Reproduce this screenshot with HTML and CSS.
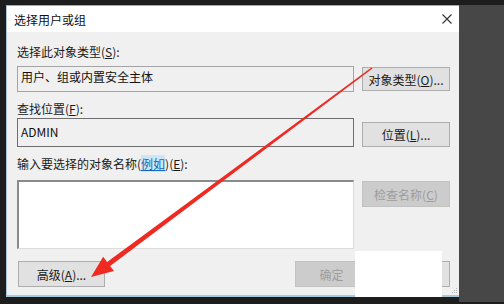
FILE: index.html
```html
<!DOCTYPE html>
<html lang="zh-CN">
<head>
  <meta charset="UTF-8" />
  <title>选择用户或组</title>
  <link rel="stylesheet" href="styles.css">
</head>
<body>
  <div class="screen">
    <div class="desk">
      <div class="dialog">
        <div class="titlebar">
          <span>选择用户或组</span>
          <svg class="close-icon" viewBox="0 0 10 10">
            <path d="M0.5 0.5 L9.5 9.5 M9.5 0.5 L0.5 9.5" />
          </svg>
        </div>

        <div class="content">
          <div class="label label-first">选择此对象类型(<u>S</u>):</div>
          <div class="row">
            <div class="field field-type">用户、组或内置安全主体</div>
            <button class="btn btn-type">对象类型(<u>O</u>)...</button>
          </div>

          <div class="label label-place">查找位置(<u>F</u>):</div>
          <div class="row">
            <div class="field field-place">ADMIN</div>
            <button class="btn btn-place">位置(<u>L</u>)...</button>
          </div>

          <div class="label label-name">输入要选择的对象名称(<a class="link">例如</a>)(<u>E</u>):</div>
          <div class="row">
            <div class="field field-name"></div>
            <button class="btn btn-check" disabled>检查名称(<u>C</u>)</button>
          </div>

          <div class="footer">
            <button class="btn btn-adv">高级(<u>A</u>)...</button>
            <div class="footer-right">
              <button class="btn btn-small" disabled>确定</button>
              <button class="btn btn-small">取消</button>
            </div>
          </div>
        </div>

        <!-- 右下角拖动点 -->
        <svg class="grip" viewBox="0 0 7 7">
          <rect x="5" y="1" width="1" height="1" />
          <rect x="3" y="3" width="1" height="1" />
          <rect x="5" y="3" width="1" height="1" />
          <rect x="1" y="5" width="1" height="1" />
          <rect x="3" y="5" width="1" height="1" />
          <rect x="5" y="5" width="1" height="1" />
        </svg>
      </div>
      <div class="side"></div>
    </div>

    <!-- 盖住取消按钮的白块 -->
    <div class="patch"></div>

    <!-- 红色箭头 -->
    <svg class="arrow" viewBox="0 0 504 304">
      <polygon points="372.5,68.6 110.1,265.9 114,271.1 91,277 103.2,256.7 107.1,261.9 371.5,67.4" />
    </svg>
  </div>
</body>
</html>
```

FILE: styles.css
```css
* {
  margin: 0;
  padding: 0;
  box-sizing: border-box;
}
body {
  background-color: #1d1d1d;
  font-family: "Noto Sans CJK SC", "Microsoft YaHei", sans-serif;
  font-size: 12px;
  color: #1a1a1a;
}
.screen {
  position: relative;
  width: 504px;
  height: 304px;
  padding: 5px 0 0 6px;
  overflow: hidden;
}
.desk {
  display: flex;
  align-items: flex-start;
}
.dialog {
  position: relative;
  width: 453px;
  height: 292px;
  background-color: #f0f0f0;
  border-top: 1px solid #74b6e4;
  border-left: 1px solid #a9c4d8;
  border-bottom: 2px solid #a6c9de;
}
.side {
  flex: 1;
  height: 297px;
  background-color: #474747;
}
.titlebar {
  height: 26px;
  background-color: #fff;
  display: flex;
  align-items: center;
  justify-content: space-between;
  padding: 0 7px 0 7px;
  color: #111;
}
.close-icon {
  width: 10px;
  height: 10px;
  stroke: #333;
  stroke-width: 1.1;
  fill: none;
}
.content {
  padding: 12px 9px 0 10px;
}
.label {
  height: 16px;
  line-height: 16px;
}
.label-first {
  margin-bottom: 6px;
}
.label-place {
  margin-top: 9px;
  margin-bottom: 1px;
}
.label-name {
  margin-top: 9px;
  margin-bottom: 8px;
}
.link {
  color: #1466b8;
  text-decoration: underline;
  background-color: #cfe5f6;
}
.row {
  display: grid;
  grid-template-columns: 337px 88px;
  column-gap: 8px;
  align-items: start;
}
.field {
  padding: 2px 3px;
  line-height: 16px;
  color: #111;
}
.field-type {
  height: 26px;
  border: 1px solid #a4a4a4;
}
.field-place {
  height: 29px;
  padding-top: 5px;
  border: 1px solid #6e6e6e;
}
.field-name {
  height: 69px;
  background-color: #fff;
  border: 1px solid #dcdcdc;
  border-top: 2px solid #8a8a8a;
  border-left: 2px solid #8a8a8a;
}
.btn {
  font-family: inherit;
  font-size: 12px;
  color: #1a1a1a;
  background-color: #e1e1e1;
  border: 1px solid #adadad;
  height: 26px;
}
.btn:disabled {
  background-color: #cccccc;
  border-color: #c2c2c2;
  color: #9d9d9d;
}
.btn-type {
  height: 24px;
  margin-top: 1px;
}
.btn-place {
  height: 25px;
  margin-top: 4px;
}
.btn-check {
  margin-top: 1px;
}
.footer {
  margin-top: 12px;
  display: flex;
  justify-content: space-between;
}
.btn-adv {
  width: 87px;
  margin-left: 1px;
}
.footer-right {
  display: flex;
  gap: 9px;
  margin-right: 0;
}
.btn-small {
  width: 73px;
}
.grip {
  position: absolute;
  right: 1px;
  bottom: 1px;
  width: 7px;
  height: 7px;
  fill: #b5b5b5;
}
.patch {
  position: absolute;
  left: 355px;
  top: 251px;
  width: 87px;
  height: 46px;
  background-color: #fff;
}
.arrow {
  position: absolute;
  left: 0;
  top: 0;
  width: 504px;
  height: 304px;
  fill: #ee2a22;
}
```
